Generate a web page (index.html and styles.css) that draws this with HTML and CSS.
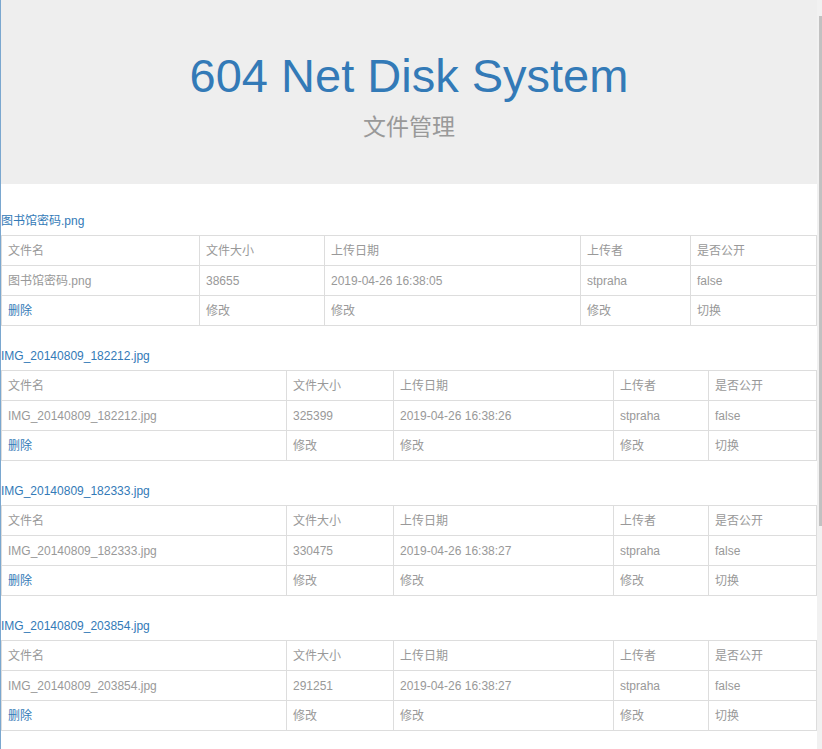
FILE: index.html
```html
<!DOCTYPE html>
<html lang="zh-CN">
<head>
<meta charset="utf-8">
<title>604 Net Disk System</title>
<link rel="stylesheet" href="styles.css">
</head>
<body>
<div class="jumbotron">
  <h1 class="title">604 Net Disk System</h1>
  <p class="subtitle">文件管理</p>
</div>
<div class="files">
  <section class="file">
    <a class="fname" href="#">图书馆密码.png</a>
    <table class="grid grid-short">
      <colgroup><col class="c-name"><col class="c-size"><col class="c-date"><col class="c-user"><col class="c-pub"></colgroup>
      <tr><td>文件名</td><td>文件大小</td><td>上传日期</td><td>上传者</td><td>是否公开</td></tr>
      <tr><td>图书馆密码.png</td><td>38655</td><td>2019-04-26 16:38:05</td><td>stpraha</td><td>false</td></tr>
      <tr><td><a class="act" href="#">删除</a></td><td>修改</td><td>修改</td><td>修改</td><td>切换</td></tr>
    </table>
  </section>
  <section class="file">
    <a class="fname" href="#">IMG_20140809_182212.jpg</a>
    <table class="grid grid-long">
      <colgroup><col class="c-name"><col class="c-size"><col class="c-date"><col class="c-user"><col class="c-pub"></colgroup>
      <tr><td>文件名</td><td>文件大小</td><td>上传日期</td><td>上传者</td><td>是否公开</td></tr>
      <tr><td>IMG_20140809_182212.jpg</td><td>325399</td><td>2019-04-26 16:38:26</td><td>stpraha</td><td>false</td></tr>
      <tr><td><a class="act" href="#">删除</a></td><td>修改</td><td>修改</td><td>修改</td><td>切换</td></tr>
    </table>
  </section>
  <section class="file">
    <a class="fname" href="#">IMG_20140809_182333.jpg</a>
    <table class="grid grid-long">
      <colgroup><col class="c-name"><col class="c-size"><col class="c-date"><col class="c-user"><col class="c-pub"></colgroup>
      <tr><td>文件名</td><td>文件大小</td><td>上传日期</td><td>上传者</td><td>是否公开</td></tr>
      <tr><td>IMG_20140809_182333.jpg</td><td>330475</td><td>2019-04-26 16:38:27</td><td>stpraha</td><td>false</td></tr>
      <tr><td><a class="act" href="#">删除</a></td><td>修改</td><td>修改</td><td>修改</td><td>切换</td></tr>
    </table>
  </section>
  <section class="file">
    <a class="fname" href="#">IMG_20140809_203854.jpg</a>
    <table class="grid grid-long">
      <colgroup><col class="c-name"><col class="c-size"><col class="c-date"><col class="c-user"><col class="c-pub"></colgroup>
      <tr><td>文件名</td><td>文件大小</td><td>上传日期</td><td>上传者</td><td>是否公开</td></tr>
      <tr><td>IMG_20140809_203854.jpg</td><td>291251</td><td>2019-04-26 16:38:27</td><td>stpraha</td><td>false</td></tr>
      <tr><td><a class="act" href="#">删除</a></td><td>修改</td><td>修改</td><td>修改</td><td>切换</td></tr>
    </table>
  </section>
</div>
<div class="scrollbar" aria-hidden="true"><div class="scroll-thumb"></div></div>
</body>
</html>
```
FILE: styles.css
```css
html {
  background: #fff;
}
body {
  margin: 0 5px 0 0;
  border-left: 1px solid #7aa7cf;
  min-height: 749px;
  box-sizing: border-box;
  font-family: "Liberation Sans", Arial, "Noto Sans CJK SC", sans-serif;
  font-size: 12px;
  line-height: 17px;
  color: #999;
}
.jumbotron {
  background: #eee;
  text-align: center;
  padding: 50px 0 42px;
  margin-bottom: 27px;
}
.title {
  margin: 0;
  font-weight: normal;
  font-size: 47px;
  line-height: 52px;
  color: #337ab7;
}
.subtitle {
  margin: 10px 0 0;
  font-size: 23px;
  line-height: 30px;
  color: #999;
}
.file {
  margin-bottom: 20px;
}
.fname {
  display: block;
  padding-top: 2px;
  margin-bottom: 5px;
  color: #337ab7;
  text-decoration: none;
}
.act {
  color: #337ab7;
  text-decoration: none;
}
.grid {
  width: 100%;
  table-layout: fixed;
  border-collapse: collapse;
}
.grid td {
  border: 1px solid #ddd;
  padding: 7px 6px 5px;
  white-space: nowrap;
  overflow: hidden;
}
.grid-short .c-name { width: 198px; }
.grid-short .c-size { width: 125px; }
.grid-short .c-date { width: 256px; }
.grid-short .c-user { width: 110px; }
.grid-long .c-name { width: 285px; }
.grid-long .c-size { width: 107px; }
.grid-long .c-date { width: 220px; }
.grid-long .c-user { width: 95px; }

.scrollbar {
  position: fixed;
  top: 0;
  right: 0;
  bottom: 0;
  width: 5px;
  background: #f1f1f1;
}
.scroll-thumb {
  position: absolute;
  top: 16px;
  left: 2px;
  right: 0;
  height: 510px;
  background: #c1c1c1;
}
```
